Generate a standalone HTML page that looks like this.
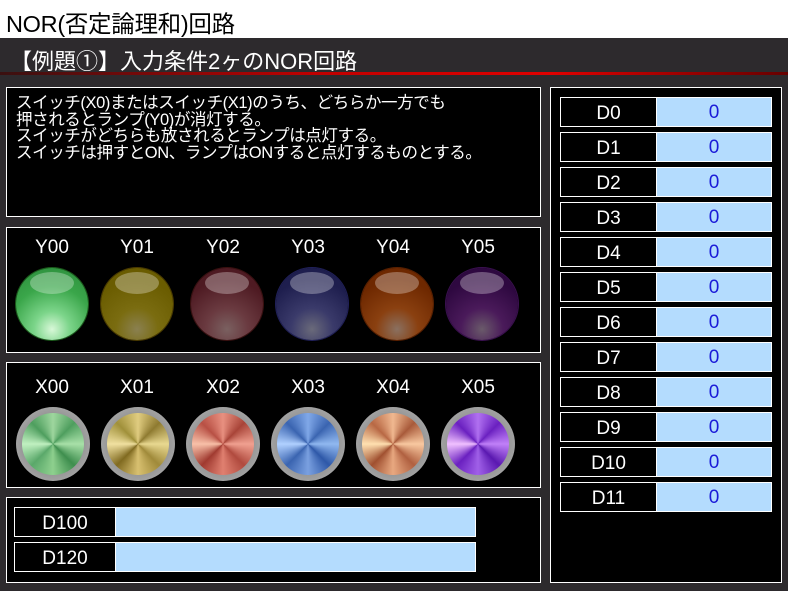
<!DOCTYPE html><html><head><meta charset="utf-8"><style>
*{margin:0;padding:0;box-sizing:border-box}
body{width:788px;height:591px;background:#2d2a2d;position:relative;overflow:hidden;font-family:"Liberation Sans","Noto Sans CJK JP",sans-serif}
.a{position:absolute}
.box{position:absolute;background:#000;border:1px solid #fff}
.lbl{position:absolute;color:#fff;font-size:19px;width:80px;text-align:center}
.lamp{position:absolute;width:72px;height:72px;border-radius:50%}
.lamp:after{content:"";position:absolute;left:14px;top:4px;width:44px;height:22px;border-radius:50%;background:rgba(255,255,255,.3)}
.btn{position:absolute;width:74px;height:74px;border-radius:50%;background:radial-gradient(circle,#666 0,#aaa 80%,#eee 86%,#888 93%,#bbb 100%);}
.btn i{position:absolute;left:6px;top:6px;width:62px;height:62px;border-radius:50%}
.row{position:absolute;height:30px;border:1px solid #fff;background:#000}
.row .k{position:absolute;left:0;top:1px;height:28px;color:#fff;font-size:19px;line-height:30px;text-align:center}
.row .v{position:absolute;top:0;height:28px;background:#b4dcfe;border-left:1px solid #fff;color:#1a1ad8;font-size:19px;line-height:30px;text-align:center}
</style></head><body>
<div class="a" style="left:0;top:0;width:788px;height:38px;background:#fff"></div>
<div class="a" style="left:6px;top:5px;font-size:23.5px;color:#000;letter-spacing:-0.3px">NOR(否定論理和)回路</div>
<div class="a" style="left:10px;top:44px;font-size:22px;color:#fff">【例題①】入力条件2ヶのNOR回路</div>
<div class="a" style="left:0;top:72px;width:788px;height:3px;background:linear-gradient(90deg,#3a1010,#c00000 40%,#e00000 70%,#600)"></div>
<div class="box" style="left:6px;top:87px;width:535px;height:130px"></div>
<div class="a" style="left:16px;top:95px;color:#fff;font-size:16.5px;line-height:16.5px;white-space:pre;letter-spacing:-0.4px">スイッチ(X0)またはスイッチ(X1)のうち、どちらか一方でも
押されるとランプ(Y0)が消灯する。
スイッチがどちらも放されるとランプは点灯する。
スイッチは押すとON、ランプはONすると点灯するものとする。</div>
<div class="box" style="left:6px;top:227px;width:535px;height:126px"></div>
<div class="box" style="left:6px;top:362px;width:535px;height:126px"></div>
<div class="box" style="left:6px;top:497px;width:535px;height:86px"></div>
<div class="box" style="left:550px;top:87px;width:232px;height:496px"></div>

<div class="lbl" style="left:12px;top:237px">Y00</div>
<div class="lbl" style="left:97px;top:237px">Y01</div>
<div class="lbl" style="left:183px;top:237px">Y02</div>
<div class="lbl" style="left:268px;top:237px">Y03</div>
<div class="lbl" style="left:353px;top:237px">Y04</div>
<div class="lbl" style="left:438px;top:237px">Y05</div>
<div class="lamp" style="left:16px;top:268px;background:radial-gradient(circle at 50% 85%,#d8f8d8 0,#7cd58a 25%,#3aa64a 60%,#2a8a3a 100%);box-shadow:0 0 0 1px #1a5a1a"></div>
<div class="lamp" style="left:101px;top:268px;background:radial-gradient(circle at 50% 85%,#8a8050 0,#7a6c10 30%,#6a5c00 70%);box-shadow:0 0 0 1px #4a3a00"></div>
<div class="lamp" style="left:191px;top:268px;background:radial-gradient(circle at 50% 85%,#7a6060 0,#6a3a40 30%,#4e1a22 70%);box-shadow:0 0 0 1px #3a1010"></div>
<div class="lamp" style="left:276px;top:268px;background:radial-gradient(circle at 50% 85%,#6a6a7a 0,#3a3a6a 30%,#1e1e4e 70%);box-shadow:0 0 0 1px #20205a"></div>
<div class="lamp" style="left:361px;top:268px;background:radial-gradient(circle at 50% 85%,#8a7060 0,#8a4010 30%,#6e2800 70%);box-shadow:0 0 0 1px #5a2000"></div>
<div class="lamp" style="left:446px;top:268px;background:radial-gradient(circle at 50% 85%,#6a5a6a 0,#4a1a5a 30%,#2e0840 70%);box-shadow:0 0 0 1px #3a1050"></div>

<div class="lbl" style="left:12px;top:377px">X00</div>
<div class="lbl" style="left:97px;top:377px">X01</div>
<div class="lbl" style="left:183px;top:377px">X02</div>
<div class="lbl" style="left:268px;top:377px">X03</div>
<div class="lbl" style="left:353px;top:377px">X04</div>
<div class="lbl" style="left:438px;top:377px">X05</div>
<div class="btn" style="left:16px;top:407px"><i style="background:conic-gradient(#9ed69e,#4e9e5e,#a8e0a8,#3e8e4e,#8ed08e,#5aa86a,#c0f0c0,#4e9e5e,#9ed69e)"></i></div>
<div class="btn" style="left:101px;top:407px"><i style="background:conic-gradient(#e0cc80,#8e7a30,#e8d890,#a08a3a,#d8c070,#806a20,#f0e0a0,#a0903a,#e0cc80)"></i></div>
<div class="btn" style="left:186px;top:407px"><i style="background:conic-gradient(#e89080,#a84438,#f0a090,#b04a3e,#e08070,#a03a30,#f8c0a8,#b85044,#e89080)"></i></div>
<div class="btn" style="left:271px;top:407px"><i style="background:conic-gradient(#80a8e8,#3a64b0,#90b8f0,#2e58a8,#7aa0e0,#3a64b0,#b0d0ff,#3a64b0,#80a8e8)"></i></div>
<div class="btn" style="left:356px;top:407px"><i style="background:conic-gradient(#f0b890,#a85a3a,#f8c8a0,#b06040,#e8a880,#a05030,#ffe0b0,#b86844,#f0b890)"></i></div>
<div class="btn" style="left:441px;top:407px"><i style="background:conic-gradient(#b070f0,#6a20c0,#c080f8,#5a18b0,#a060e8,#6a20c0,#f0c0ff,#6a20c0,#b070f0)"></i></div>

<div class="row" style="left:14px;top:507px;width:462px"><div class="k" style="width:100px">D100</div><div class="v" style="left:100px;width:360px"></div></div>
<div class="row" style="left:14px;top:542px;width:462px"><div class="k" style="width:100px">D120</div><div class="v" style="left:100px;width:360px"></div></div>

<div class="row" style="left:560px;top:97px;width:212px"><div class="k" style="width:95px">D0</div><div class="v" style="left:95px;width:115px">0</div></div>
<div class="row" style="left:560px;top:132px;width:212px"><div class="k" style="width:95px">D1</div><div class="v" style="left:95px;width:115px">0</div></div>
<div class="row" style="left:560px;top:167px;width:212px"><div class="k" style="width:95px">D2</div><div class="v" style="left:95px;width:115px">0</div></div>
<div class="row" style="left:560px;top:202px;width:212px"><div class="k" style="width:95px">D3</div><div class="v" style="left:95px;width:115px">0</div></div>
<div class="row" style="left:560px;top:237px;width:212px"><div class="k" style="width:95px">D4</div><div class="v" style="left:95px;width:115px">0</div></div>
<div class="row" style="left:560px;top:272px;width:212px"><div class="k" style="width:95px">D5</div><div class="v" style="left:95px;width:115px">0</div></div>
<div class="row" style="left:560px;top:307px;width:212px"><div class="k" style="width:95px">D6</div><div class="v" style="left:95px;width:115px">0</div></div>
<div class="row" style="left:560px;top:342px;width:212px"><div class="k" style="width:95px">D7</div><div class="v" style="left:95px;width:115px">0</div></div>
<div class="row" style="left:560px;top:377px;width:212px"><div class="k" style="width:95px">D8</div><div class="v" style="left:95px;width:115px">0</div></div>
<div class="row" style="left:560px;top:412px;width:212px"><div class="k" style="width:95px">D9</div><div class="v" style="left:95px;width:115px">0</div></div>
<div class="row" style="left:560px;top:447px;width:212px"><div class="k" style="width:95px">D10</div><div class="v" style="left:95px;width:115px">0</div></div>
<div class="row" style="left:560px;top:482px;width:212px"><div class="k" style="width:95px">D11</div><div class="v" style="left:95px;width:115px">0</div></div>
</body></html>
